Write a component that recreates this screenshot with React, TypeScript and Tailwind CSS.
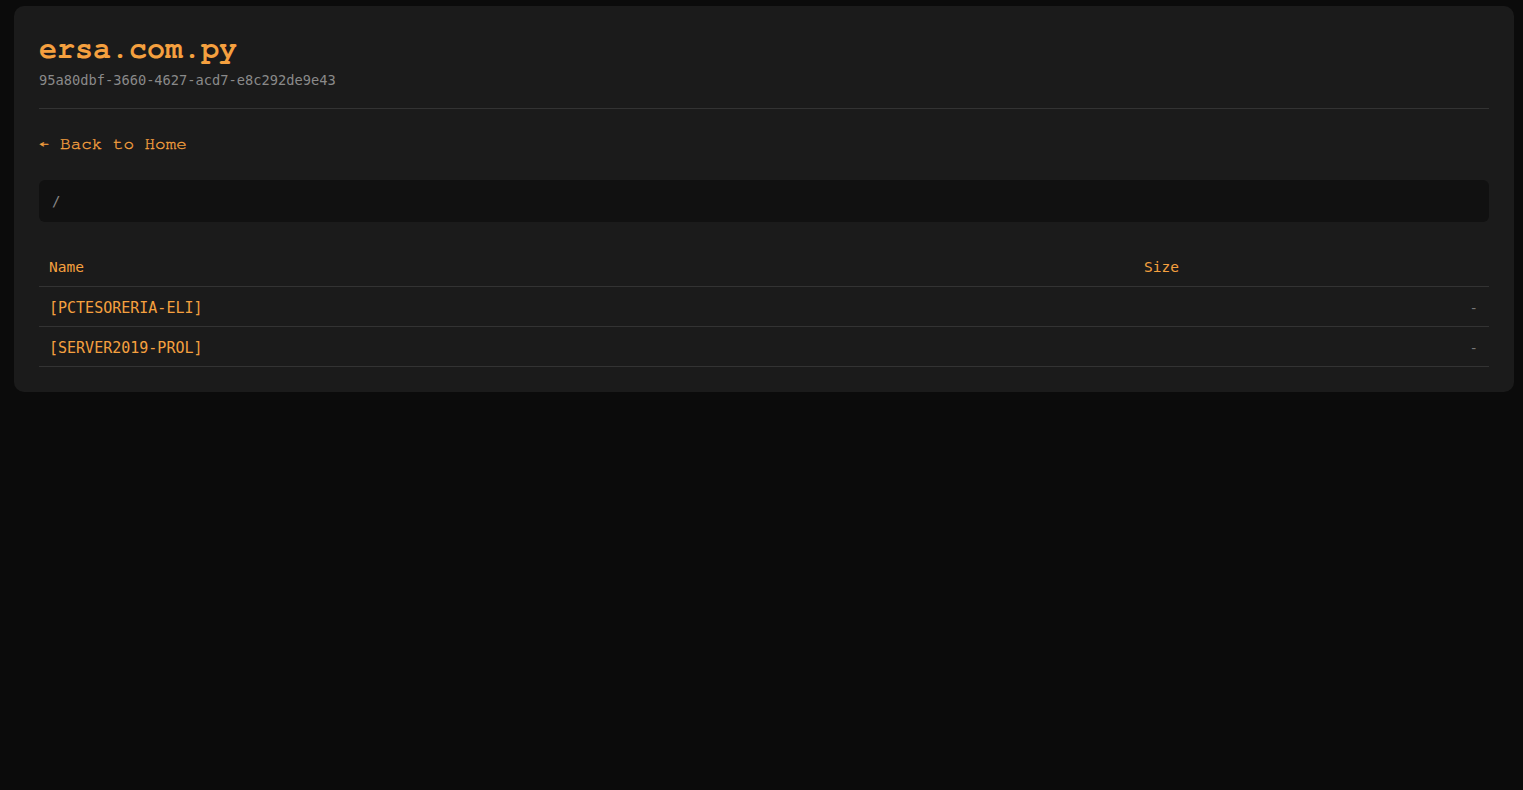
import React from "react";

const rows = ["[PCTESORERIA-ELI]", "[SERVER2019-PROL]"];

const courier =
  "[font-family:'Nimbus_Mono_PS','Nimbus_Mono_L','FreeMono','Courier_10_Pitch','Courier_New','Liberation_Mono',monospace]";

export default function App() {
  return (
    <div className="min-h-screen bg-[#0b0b0b] pl-[14px] pr-[9px] py-[6px] [font-family:'DejaVu_Sans_Mono',monospace]">
      <div className="rounded-[10px] bg-[#1b1b1b] px-[25px] pb-[25px] pt-[26px]">
        <div className="border-b border-[#333] pb-[18px]">
          <h1 className={`text-[30px] font-bold leading-[34px] text-[#f5a03f] ${courier}`}>
            ersa.com.py
          </h1>
          <div className="mt-[4px] text-[13.7px] leading-[20px] text-[#8a8a8a]">
            95a80dbf-3660-4627-acd7-e8c292de9e43
          </div>
        </div>
        <div className="mt-[23px]">
          <a className={`text-[17.6px] leading-[24px] text-[#f5a03f] [-webkit-text-stroke:0.35px_#f5a03f] ${courier}`}>
            ← Back to Home
          </a>
        </div>
        <div className="mt-[24px] flex h-[42px] items-center rounded-[6px] bg-[#111111] px-[13px] text-[14px] text-[#8a8a8a]">
          /
        </div>
        <div className="mt-[26px]">
          <div className="grid grid-cols-[1fr_355px] border-b border-[#333] text-[14.5px] text-[#f5a03f]">
            <div className="px-[10px] py-[9px] leading-[20px]">Name</div>
            <div className="px-[10px] py-[9px] leading-[20px]">Size</div>
          </div>
          {rows.map((r) => (
            <div key={r} className="grid h-[40px] grid-cols-[1fr_355px] items-center border-b border-[#333] pt-[3px]">
              <div className="px-[10px] text-[15px] text-[#f5a03f]">{r}</div>
              <div className="px-[10px] pr-[11px] text-right text-[14px] text-[#777]">-</div>
            </div>
          ))}
        </div>
      </div>
    </div>
  );
}
